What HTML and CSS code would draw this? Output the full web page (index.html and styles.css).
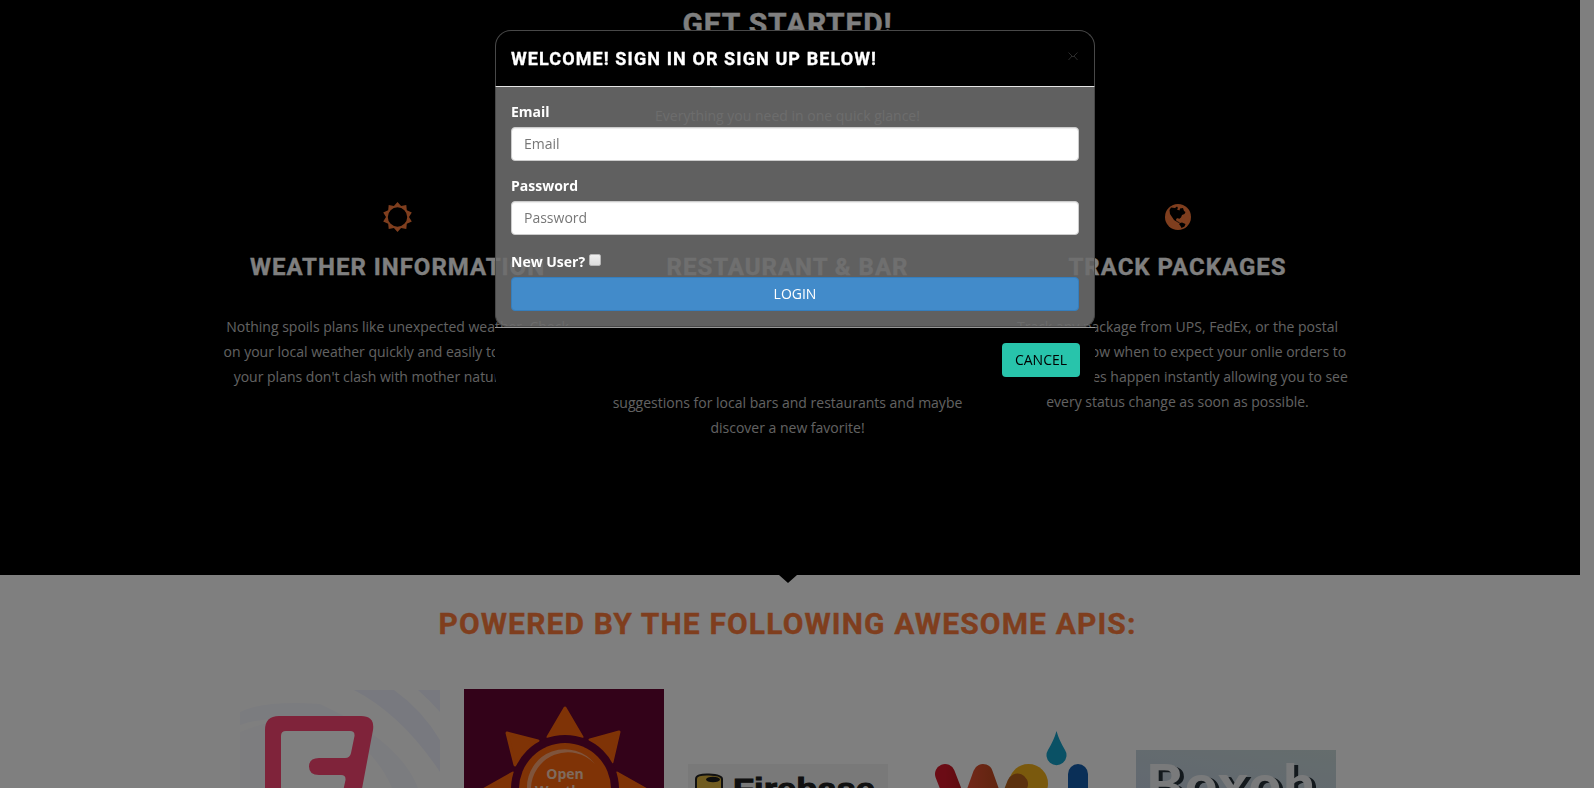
FILE: index.html
```html
<!DOCTYPE html>
<html lang="en">
<head>
<meta charset="utf-8">
<title>Get Started</title>
<link rel="stylesheet" href="styles.css">
</head>
<body>
<div class="page">
  <section class="features">
    <h2 class="heading">Get Started!</h2>
    <div class="rule"></div>
    <p class="tagline">Everything you need in one quick glance!</p>
    <div class="columns">
      <div class="column">
        <svg class="icon" viewBox="-15.500 -16 32 32"><path fill-rule="evenodd" d="M0-15 3.6-11 8.8-12.1 9.3-6.8 14.3-4.6 11.500 0 14.3 4.6 9.3 6.8 8.8 12.1 3.6 11 0 15-3.6 11-8.8 12.1-9.3 6.8-14.3 4.6-11.500 0-14.3-4.6-9.3-6.8-8.8-12.1-3.6-11ZM0-9.7A9.7 9.7 0 1 0 0 9.7 9.7 9.7 0 1 0 0-9.7Z"/></svg>
        <h3 class="title">Weather Information</h3>
        <p class="copy">Nothing spoils plans like unexpected weather. Check<br>on your local weather quickly and easily to make sure<br>your plans don't clash with mother nature tonight.</p>
      </div>
      <div class="column">
        <div class="icon"></div>
        <h3 class="title">Restaurant &amp; Bar</h3>
        <p class="copy copy-late">suggestions for local bars and restaurants and maybe<br>discover a new favorite!</p>
      </div>
      <div class="column">
        <svg class="icon" viewBox="-16 -16 32 32"><circle r="13"/><path class="land" d="M-8.5-7-7-9.5-3-9-1-10.500 0-9-1-7.500 1.500-6.500 2-8.500 5-9 6-6 7.500-5 6.500-3 4-2 3 .5 1 2 0 1-2 2-1.500 4 1 5 2 6 0 5.500-4 3-6 0-8-3ZM2 6 4 5.500 7.500 7 6.500 9.500 3.500 11 2.500 9 1 7Z"/></svg>
        <h3 class="title">Track Packages</h3>
        <p class="copy">Track any package from UPS, FedEx, or the postal<br>service to know when to expect your onlie orders to<br>arrive. Updates happen instantly allowing you to see<br>every status change as soon as possible.</p>
      </div>
    </div>
  </section>
  <section class="apis">
    <div class="arrow"></div>
    <h2 class="heading heading-accent">Powered by the following awesome APIs:</h2>
    <div class="logos">
      <svg class="logo" viewBox="0 0 200 98" height="98">
        <g fill="#f1f3ff"><path d="M114 0H154Q182 20 200 50V82Q162 25 114 0Z"/><path d="M178 0H200V22Q189 10 178 0Z"/><path d="M124 58Q142 75 152 98H178Q160 51 80 14Q25 10 0 22V35Q60 15 124 58Z" opacity=".6"/><path d="M0 42Q45 22 90 35L75 98H0Z" opacity=".3"/></g>
        <path d="M25 120V40Q25 26 39 26H121Q135 26 133 40L118 120Z" fill="#ff4674"/>
        <path d="M41 120V46Q41 41 46 41H110Q115 41 114.500 46L111 63Q110 68 105 68H79Q69 68 69 76.500T79 85H101Q106 85 105.500 90L99 120Z" fill="#fff"/>
      </svg>
      <svg class="logo" viewBox="0 0 200 99" height="99">
        <path fill="#660432" d="M0 0H200V99H0Z"/>
        <g fill="#ff660c" stroke="#ff660c" stroke-width="3" stroke-linejoin="round"><path d="M101 19 84 48H118Z"/><path d="M43 44 51 76 74 52Z"/><path d="M155 43 126 51 148 73Z"/><path d="M49 84 10 106H49Z"/><path d="M153 84 192 106H153Z"/></g>
        <circle cx="101" cy="100" r="54" fill="#660432"/><circle cx="101" cy="100" r="46" fill="#ff660c"/>
        <path d="M63 100A38 38 0 0 1 131 75A37 37 0 0 0 67 100Z" fill="#ffa878"/>
        <g class="openweather" text-anchor="middle"><text x="101" y="90">Open</text><text x="101" y="107">Weather</text></g>
      </svg>
      <svg class="logo" viewBox="0 0 200 24" height="24">
        <path fill="#f2f2f2" d="M0 0H200V24H0Z"/>
        <path d="M8 28V15Q8 10 21 10.500T34 15V28" fill="#e2b841" stroke="#222" stroke-width="2"/><ellipse cx="25" cy="15.500" rx="7" ry="2.800" fill="#1a1a1a"/>
        <text class="firebase" x="45" y="35" textLength="142" lengthAdjust="spacingAndGlyphs">Firebase</text>
      </svg>
      <svg class="logo" viewBox="0 0 200 57" height="57">
        <defs><linearGradient id="red" x1="0" x2="1"><stop stop-color="#d7182a"/><stop offset="1" stop-color="#bd1820"/></linearGradient><linearGradient id="orange" x1="0" x2="1"><stop stop-color="#e55033"/><stop offset="1" stop-color="#bf491e"/></linearGradient></defs>
        <circle cx="116.500" cy="52.500" r="19.500" fill="#f4b21b"/>
        <g fill="none" stroke-linecap="round" stroke-width="20"><path d="M33 43 49 84" stroke="url(#red)"/><path d="M55 88 71 43 87 88" stroke="url(#orange)" stroke-linejoin="round"/><path d="M95 80 105.500 53" stroke="#b8631c" stroke-width="21"/><path d="M166 43V80" stroke="#145fae"/></g>
        <path d="M144.500 0Q147 9 153 19A10 10 0 1 1 136 19Q142 9 144.500 0Z" fill="#15a3cb"/>
      </svg>
      <svg class="logo" viewBox="0 0 200 38" height="38">
        <defs><linearGradient id="sky" x1="1" x2="0" y2="1"><stop stop-color="#cadada"/><stop offset="1" stop-color="#c5d2e2"/></linearGradient></defs>
        <path fill="url(#sky)" d="M0 0H200V38H0Z"/>
        <text class="boxoh" x="10" y="54" textLength="169">Boxoh</text>
      </svg>
    </div>
  </section>
</div>
<div class="backdrop"></div>
<div class="modal">
  <div class="modal-header"><h4 class="modal-title">Welcome! Sign in or sign up below!</h4><svg class="close" width="10" height="9" viewBox="0 0 10 9"><path d="M.5.500 4 4 .5 8M9.500.500 6 4 9.500 8M3 4.500H7"/></svg></div>
  <form class="modal-body">
    <label class="label" for="email">Email</label>
    <input class="field" id="email" type="email" placeholder="Email">
    <label class="label" for="password">Password</label>
    <input class="field" id="password" type="password" placeholder="Password">
    <div class="new-user"><label for="new">New User?</label><input class="check" id="new" type="checkbox"></div>
    <button class="button login" type="button">LOGIN</button>
  </form>
  <div class="modal-footer"><button class="button cancel" type="button">CANCEL</button></div>
</div>
</body>
</html>
```
FILE: styles.css
```css
* { box-sizing: border-box; }
body { margin: 0; background: #fff; font: 14px/25px "Open Sans", sans-serif; }
h2, h3, h4, p { margin: 0; }
.page { height: 788px; overflow: hidden; }
.features { width: 1580px; height: 575px; padding: 4px 5px 0 0; background: #000; color: #fff; text-align: center; }
.heading { font: 700 30px/40px Roboto, sans-serif; letter-spacing: .85px; text-transform: uppercase; text-align: center; -webkit-text-stroke: .4px; }
.rule { width: 154px; height: 3px; margin: 41px auto 0; background: #2ac5ac; }
.tagline { padding-top: 15px; color: #ccc; }
.columns { display: grid; grid-template-columns: repeat(3, 390px); justify-content: center; padding-top: 73px; }
.column { text-align: center; }
.icon { display: block; width: 32px; height: 32px; margin: 0 auto; fill: #ff7d3c; }
.land { fill: #000; }
.title { padding-top: 20px; font: 700 24px/28px Roboto, sans-serif; letter-spacing: 1px; text-transform: uppercase; -webkit-text-stroke: .3px; }
.copy { padding-top: 33px; color: #c4c4c4; white-space: nowrap; }
.copy-late { padding-top: 109px; }
.apis { width: 1575px; height: 213px; display: flex; flex-direction: column; align-items: center; }
.arrow { border: 9px solid transparent; border-top: 8px solid #000; border-bottom: 0; }
.heading-accent { padding-top: 21px; color: #ff7d3c; letter-spacing: 1.14px; }
.logos { display: flex; gap: 24px; align-items: flex-end; margin-top: auto; }
.logo { display: block; width: 200px; }
.openweather { font: 700 14px "Open Sans", sans-serif; fill: #ffd5bb; }
.firebase { font: 700 30px "Liberation Sans", sans-serif; fill: #202020; stroke: #202020; }
.boxoh { font: 900 56px Lato, sans-serif; fill: #f3f5f6; text-shadow: 4px 2px #26323b; }
.backdrop { position: fixed; inset: 0; background: rgba(0, 0, 0, .5); }
.modal { position: absolute; top: 30px; left: 495px; width: 600px; color: #fff; }
.modal-header { display: flex; justify-content: space-between; height: 57px; padding: 17px 16px 0 15px; border: 1px solid #484848; border-bottom-color: #e5e5e5; border-radius: 16px 16px 0 0; background: #000; }
.modal-title { font: 700 18px/22px Roboto, sans-serif; letter-spacing: 1.1px; text-transform: uppercase; -webkit-text-stroke: .3px; }
.close { margin-top: 4px; fill: none; stroke: #2b2b2b; }
.modal-body { height: 240px; padding: 12px 15px 0; border: solid #484848; border-width: 0 1px 1px; border-radius: 0 0 12px 12px; background: rgba(109, 109, 109, .88); }
.label { display: block; height: 28px; font-weight: 700; }
.field { display: block; width: 100%; height: 34px; margin-bottom: 12px; padding: 0 12px 2px; border: 1px solid #ccc; border-radius: 4px; background: #fff; font: 14px "Open Sans", sans-serif; box-shadow: inset 0 1px 1px rgba(0, 0, 0, .08); }
.field::placeholder { color: #777; }
.new-user { display: flex; gap: 4px; height: 30px; padding-top: 2px; font-weight: 700; }
.check { appearance: none; width: 12px; height: 12px; margin: 5px 0 0; border: 1px solid #b5b5b5; border-radius: 2px; background: linear-gradient(#eee, #dcdcdc); }
.button { display: block; height: 34px; padding: 0 0 2px; border: 0; border-radius: 4px; font: 14px "Open Sans", sans-serif; }
.login { width: 100%; border: 1px solid #357ebd; background: #428bca; color: #fff; }
.modal-footer { display: flex; justify-content: flex-end; height: 65px; padding: 15px 15px 0; border-top: 1px solid #999; border-radius: 0 0 16px 16px; background: #000; }
.cancel { width: 78px; background: #28c4ab; color: #000; }
```
